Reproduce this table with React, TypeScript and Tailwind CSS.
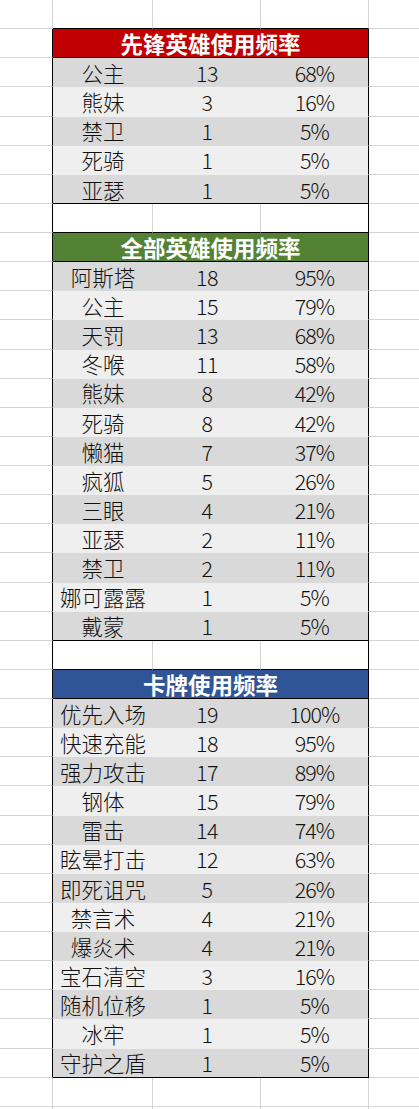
import type { ReactNode } from 'react';

type Stat = [string, number, string];

const vanguard: Stat[] = [
  ['公主', 13, '68%'],
  ['熊妹', 3, '16%'],
  ['禁卫', 1, '5%'],
  ['死骑', 1, '5%'],
  ['亚瑟', 1, '5%'],
];

const allHeroes: Stat[] = [
  ['阿斯塔', 18, '95%'],
  ['公主', 15, '79%'],
  ['天罚', 13, '68%'],
  ['冬喉', 11, '58%'],
  ['熊妹', 8, '42%'],
  ['死骑', 8, '42%'],
  ['懒猫', 7, '37%'],
  ['疯狐', 5, '26%'],
  ['三眼', 4, '21%'],
  ['亚瑟', 2, '11%'],
  ['禁卫', 2, '11%'],
  ['娜可露露', 1, '5%'],
  ['戴蒙', 1, '5%'],
];

const cards: Stat[] = [
  ['优先入场', 19, '100%'],
  ['快速充能', 18, '95%'],
  ['强力攻击', 17, '89%'],
  ['钢体', 15, '79%'],
  ['雷击', 14, '74%'],
  ['眩晕打击', 12, '63%'],
  ['即死诅咒', 5, '26%'],
  ['禁言术', 4, '21%'],
  ['爆炎术', 4, '21%'],
  ['宝石清空', 3, '16%'],
  ['随机位移', 1, '5%'],
  ['冰牢', 1, '5%'],
  ['守护之盾', 1, '5%'],
];

function Row({ inBox, children }: { inBox?: boolean; children: ReactNode }) {
  return (
    <div className="flex h-[29.14px] shrink-0">
      <div
        className={`w-[53px] shrink-0 border-r border-b border-b-[#d4d4d4] ${
          inBox ? 'border-r-black' : 'border-r-[#d4d4d4]'
        }`}
      />
      {children}
      <div className="flex-1 border-b border-[#d4d4d4]" />
    </div>
  );
}

function BlankRow({ inBox, bottomBlack }: { inBox?: boolean; bottomBlack?: boolean }) {
  const b = bottomBlack ? 'border-b-black' : 'border-b-[#d4d4d4]';
  return (
    <Row inBox={inBox}>
      <div className={`w-[100px] shrink-0 border-r border-b border-r-[#d4d4d4] ${b}`} />
      <div className={`w-[108px] shrink-0 border-r border-b border-r-[#d4d4d4] ${b}`} />
      <div
        className={`w-[108px] shrink-0 border-r border-b ${b} ${
          inBox ? 'border-r-black' : 'border-r-[#d4d4d4]'
        }`}
      />
    </Row>
  );
}

function Table({ title, color, rows }: { title: string; color: string; rows: Stat[] }) {
  return (
    <>
      <Row inBox>
        <div
          className={`w-[316px] shrink-0 border-r border-b border-black flex items-center justify-center text-white font-bold text-[22.5px] ${color}`}
        >
          {title}
        </div>
      </Row>
      {rows.map(([name, count, pct], i) => (
        <Row inBox key={name + i}>
          <div
            className={`w-[316px] shrink-0 flex border-r border-r-black border-b text-[21.5px] font-light text-[#111] ${
              i % 2 === 0 ? 'bg-[#d9d9d9]' : 'bg-[#efefef]'
            } ${i === rows.length - 1 ? 'border-b-black' : 'border-b-transparent'}`}
          >
            <div className="w-[100px] flex items-center justify-center whitespace-nowrap pt-[1px]">{name}</div>
            <div className="w-[108px] flex items-center justify-center pt-[1px] tracking-[-0.5px]">{count}</div>
            <div className="w-[107px] flex items-center justify-center pt-[1px] tracking-[-1px]">{pct}</div>
          </div>
        </Row>
      ))}
    </>
  );
}

export default function App() {
  return (
    <div
      className="w-[419px] h-[1109px] overflow-hidden bg-white flex flex-col leading-none"
      style={{ fontFamily: '"Noto Sans CJK SC", "Noto Sans", sans-serif' }}
    >
      <BlankRow bottomBlack />
      <Table title="先锋英雄使用频率" color="bg-[#c00000]" rows={vanguard} />
      <BlankRow inBox bottomBlack />
      <Table title="全部英雄使用频率" color="bg-[#548235]" rows={allHeroes} />
      <BlankRow inBox bottomBlack />
      <Table title="卡牌使用频率" color="bg-[#2f5597]" rows={cards} />
      <BlankRow />
      <BlankRow />
    </div>
  );
}
